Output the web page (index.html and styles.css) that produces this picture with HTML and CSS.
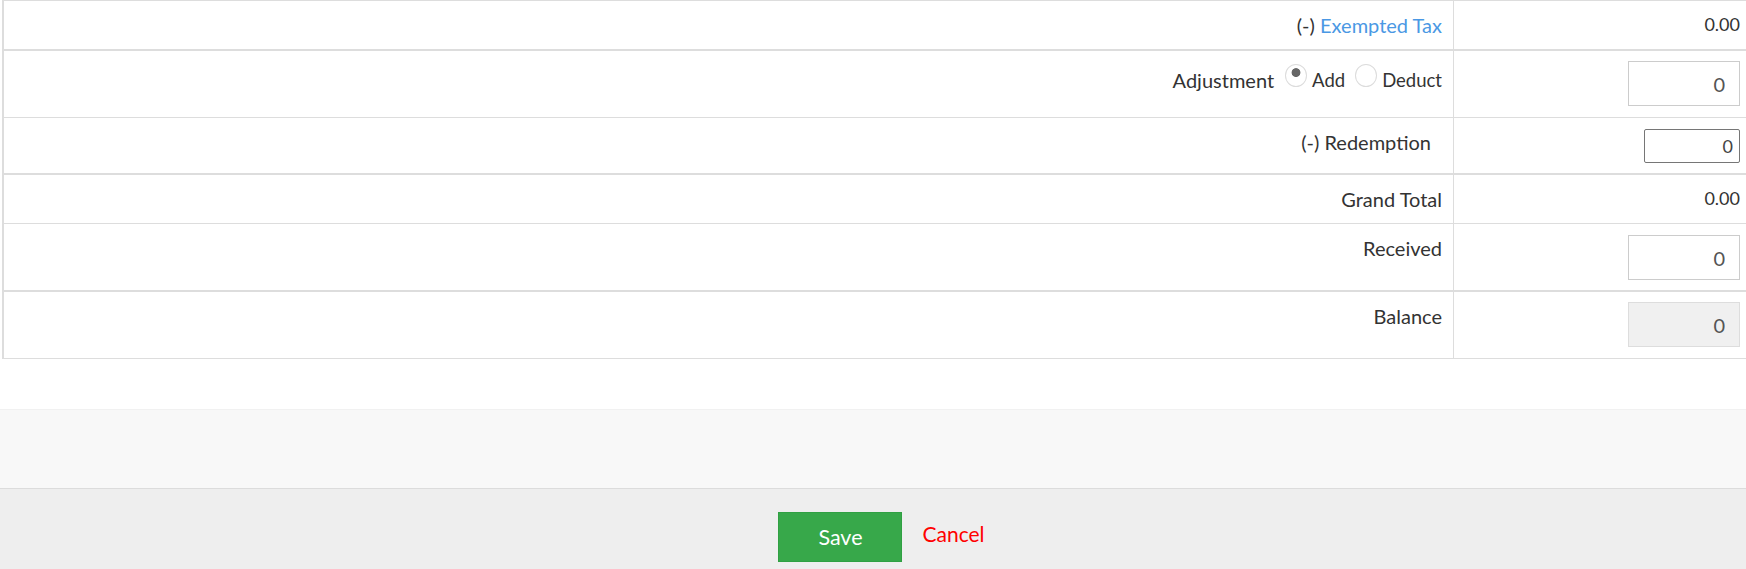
FILE: index.html
```html
<!DOCTYPE html>
<html lang="en">
<head>
<meta charset="utf-8">
<title>Summary</title>
<link rel="stylesheet" href="styles.css">
</head>
<body>
<div class="summary">
  <div class="group">
    <div class="row">
      <div class="label-cell">(-) <a class="link" href="#">Exempted Tax</a></div>
      <div class="value-cell text-value">0.00</div>
    </div>
  </div>
  <div class="group">
    <div class="row">
      <div class="label-cell adjust-cell"><span>Adjustment</span><input class="radio radio-first" type="radio" name="adj" checked><span class="radio-text">Add</span><input class="radio radio-second" type="radio" name="adj"><span class="radio-text">Deduct</span></div>
      <div class="value-cell input-value"><input class="field" type="text" value="0"></div>
    </div>
    <div class="row row-sep">
      <div class="label-cell"><span class="trail">(-) Redemption</span></div>
      <div class="value-cell small-input-value"><input class="field-native" type="text" value="0"></div>
    </div>
  </div>
  <div class="group">
    <div class="row">
      <div class="label-cell">Grand Total</div>
      <div class="value-cell text-value">0.00</div>
    </div>
    <div class="row row-sep">
      <div class="label-cell">Received</div>
      <div class="value-cell input-value input-value-b"><input class="field" type="text" value="0"></div>
    </div>
  </div>
  <div class="group">
    <div class="row">
      <div class="label-cell">Balance</div>
      <div class="value-cell input-value"><input class="field field-disabled" type="text" value="0" readonly></div>
    </div>
  </div>
</div>
<div class="band"></div>
<div class="actions">
  <button class="btn-save" type="button">Save</button>
  <a class="cancel" href="#">Cancel</a>
</div>
</body>
</html>
```

FILE: styles.css
```css
* { box-sizing: border-box; }
html, body { margin: 0; padding: 0; background: #fff; }
body {
  font-family: Lato, "Noto Sans", sans-serif;
  font-size: 20px;
  color: #333;
  overflow: hidden;
}
.summary { padding-left: 2px; }
.group {
  border-top: 1px solid #ddd;
  border-bottom: 1px solid #ddd;
  border-left: 2px solid #ddd;
}
.row {
  display: grid;
  grid-template-columns: 1fr 293px;
}
.row-sep { border-top: 1px solid #ddd; }
.label-cell {
  text-align: right;
  padding: 10px 11px 10px 10px;
  line-height: 28px;
}
.trail { margin-right: 11px; }
.link { color: #4a98e4; text-decoration: none; }
.adjust-cell {
  display: flex;
  justify-content: flex-end;
  align-items: flex-start;
  padding-top: 15px;
}
.radio-text { font-size: 18.5px; }
.radio {
  appearance: none;
  -webkit-appearance: none;
  width: 22px;
  height: 23px;
  margin: -2px 5px 0 11px;
  border: 1px solid #dcdcdc;
  border-radius: 50%;
  background: #fff;
  flex: none;
}
.radio-second { margin-left: 10px; }
.radio:checked {
  background: radial-gradient(circle at 50% 36%, #666 0, #666 4px, #fff 4.8px);
}
.value-cell {
  border-left: 1px solid #ddd;
  padding: 10px 6px 10px 0;
  text-align: right;
}
.text-value {
  font-size: 18px;
  line-height: 26px;
}
.input-value { padding: 10px 6px 11px 0; }
.input-value-b { padding: 11px 6px 10px 0; }
.small-input-value { padding: 11px 6px 10px 0; }
.field {
  display: block;
  margin-left: auto;
  width: 112px;
  height: 45px;
  border: 1px solid #ccc;
  border-radius: 0;
  padding: 0 14px 0 0;
  text-align: right;
  font-family: Lato, "Noto Sans", sans-serif;
  font-size: 20px;
  color: #555;
  background: #fff;
  outline: none;
}
.field-disabled {
  background: #f0f0f0;
  border-color: #ddd;
}
.field-native {
  display: block;
  margin-left: auto;
  width: 96px;
  height: 34px;
  border: 1px solid #767676;
  border-radius: 2px;
  padding: 0 6px 0 0;
  text-align: right;
  font-family: Lato, "Noto Sans", sans-serif;
  font-size: 18px;
  color: #444;
  background: #fff;
  outline: none;
}
.band {
  margin-top: 50px;
  height: 80px;
  background: #f8f8f8;
  border-top: 1px solid #f1f1f1;
  border-bottom: 1px solid #dcdcdc;
}
.actions {
  background: #eee;
  display: flex;
  justify-content: center;
  align-items: center;
  padding: 23px 0 7px 17px;
}
.btn-save {
  width: 124px;
  height: 50px;
  background: #37a84a;
  border: 1px solid #30a043;
  color: #fff;
  font-family: Lato, "Noto Sans", sans-serif;
  font-size: 21.5px;
  padding: 0;
  border-radius: 0;
}
.cancel {
  color: #ff0000;
  text-decoration: none;
  margin-left: 20px;
  margin-bottom: 8px;
  font-size: 21px;
}
```
